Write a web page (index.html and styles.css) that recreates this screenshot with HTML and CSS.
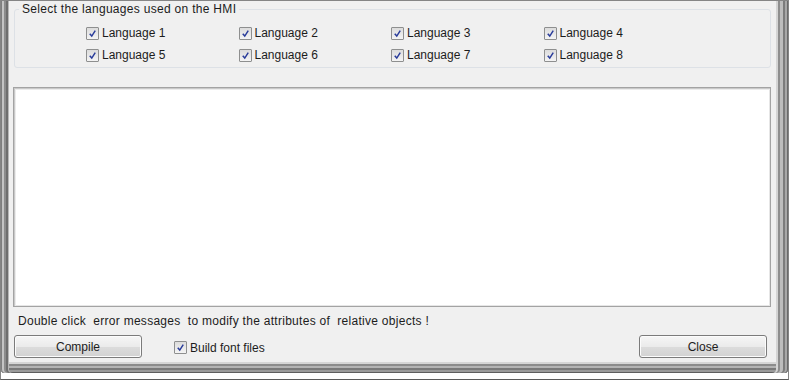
FILE: index.html
```html
<!DOCTYPE html>
<html lang="en">
  <head>
    <meta charset="UTF-8" />
    <meta name="viewport" content="width=device-width, initial-scale=1.0" />
    <title>Language compile</title>
    <link rel="stylesheet" href="styles.css">
  </head>
  <body>
    <div class="screen">
      <div class="window">
        <div class="dialog">
          <fieldset class="langs">
            <legend>Select the languages used on the HMI</legend>
            <div class="lang-grid">
              <label class="check"><span class="cb"><svg viewBox="0 0 12 12"><path d="M3 6.2 L5.2 8.8 L9 2.8" /></svg></span>Language 1</label>
              <label class="check"><span class="cb"><svg viewBox="0 0 12 12"><path d="M3 6.2 L5.2 8.8 L9 2.8" /></svg></span>Language 2</label>
              <label class="check"><span class="cb"><svg viewBox="0 0 12 12"><path d="M3 6.2 L5.2 8.8 L9 2.8" /></svg></span>Language 3</label>
              <label class="check"><span class="cb"><svg viewBox="0 0 12 12"><path d="M3 6.2 L5.2 8.8 L9 2.8" /></svg></span>Language 4</label>
              <label class="check"><span class="cb"><svg viewBox="0 0 12 12"><path d="M3 6.2 L5.2 8.8 L9 2.8" /></svg></span>Language 5</label>
              <label class="check"><span class="cb"><svg viewBox="0 0 12 12"><path d="M3 6.2 L5.2 8.8 L9 2.8" /></svg></span>Language 6</label>
              <label class="check"><span class="cb"><svg viewBox="0 0 12 12"><path d="M3 6.2 L5.2 8.8 L9 2.8" /></svg></span>Language 7</label>
              <label class="check"><span class="cb"><svg viewBox="0 0 12 12"><path d="M3 6.2 L5.2 8.8 L9 2.8" /></svg></span>Language 8</label>
            </div>
          </fieldset>

          <div class="output"></div>

          <p class="hint">Double click &nbsp;error messages &nbsp;to modify the attributes of &nbsp;relative objects !</p>

          <div class="actions">
            <button class="btn">Compile</button>
            <label class="check build"><span class="cb"><svg viewBox="0 0 12 12"><path d="M3 6.2 L5.2 8.8 L9 2.8" /></svg></span>Build font files</label>
            <button class="btn close">Close</button>
          </div>
        </div>
      </div>
    </div>
  </body>
</html>
```

FILE: styles.css
```css
body {
  margin: 0;
  padding: 0;
  background: #fff;
  font-family: "Liberation Sans", Arial, sans-serif;
  font-size: 12px;
  color: #1c1c1c;
}
.screen {
  width: 789px;
  height: 380px;
  box-sizing: border-box;
  border: 1px solid #858585;
  border-bottom-color: #5a5a5a;
  background: #fff;
}
/* window frame, cropped at the top */
.window {
  height: 372px;
  box-sizing: border-box;
  padding: 0 12px 11px 8px;
  background: #f0f0f0;
  border-radius: 0 0 4px 4px;
  box-shadow:
    inset 1px 0 0 #7e7e7e,
    inset 3px 0 0 #c4c4c4,
    inset 5px 0 0 #8c8c8c,
    inset 7px 0 0 #6e6e6e,
    inset 8px 0 0 #b8b8b8,
    inset -1px 0 0 #6a6a6a,
    inset -3px 0 0 #a8a8a8,
    inset -5px 0 0 #7c7c7c,
    inset -8px 0 0 #bdbdbd,
    inset -10px 0 0 #8e8e8e,
    inset -12px 0 0 #d4d4d4,
    inset 0 -1px 0 #5e5e5e,
    inset 0 -3px 0 #9a9a9a,
    inset 0 -5px 0 #7a7a7a,
    inset 0 -7px 0 #b4b4b4,
    inset 0 -9px 0 #8c8c8c,
    inset 0 -11px 0 #d6d6d6;
}
.dialog {
  height: 100%;
  display: flex;
  flex-direction: column;
  background: #f0f0f0;
}
.langs {
  margin: 1px 5px 0 5px;
  padding: 0 0 1px 0;
  border: 1px solid #dde1e6;
  border-radius: 3px;
  min-width: 0;
}
.langs legend {
  margin-left: 4px;
  padding: 0 3px;
  line-height: 15px;
  letter-spacing: 0.3px;
}
.lang-grid {
  display: grid;
  grid-template-columns: repeat(4, 152.5px);
  grid-auto-rows: 22px;
  margin: 5px 0 0 71px;
}
.check {
  display: flex;
  align-items: center;
  gap: 3px;
  white-space: nowrap;
}
.cb {
  width: 11px;
  height: 11px;
  border: 1px solid #8e8f8f;
  border-radius: 1px;
  background: linear-gradient(#dcdcdc, #f4f4f4);
  display: flex;
}
.cb svg {
  width: 11px;
  height: 11px;
}
.cb path {
  fill: none;
  stroke: #283b9a;
  stroke-width: 1.6;
}
.output {
  margin: 19px 5px 0 4px;
  height: 220px;
  box-sizing: border-box;
  background: #fff;
  border: 1px solid #a3a3a3;
  box-shadow: inset 1px 1px 0 #c9c9c9, inset 2px 2px 0 #ececec, inset -1px -1px 0 #e6e6e6;
}
.hint {
  margin: 7px 0 0 9px;
  line-height: 15px;
  letter-spacing: 0.28px;
}
.actions {
  display: flex;
  align-items: center;
  margin: 6px 9px 0 5px;
}
.btn {
  width: 128px;
  height: 23px;
  font-family: "Liberation Sans", Arial, sans-serif;
  font-size: 12px;
  color: #1c1c1c;
  border: 1px solid #7b7b7b;
  border-radius: 3px;
  background: linear-gradient(#f6f6f6 0%, #ebebeb 50%, #dcdcdc 51%, #d2d2d2 100%);
  box-shadow: inset 0 0 0 1px #fcfcfc;
  padding: 0;
}
.build {
  margin-left: 32px;
  margin-top: 2px;
}
.close {
  margin-left: auto;
}
```
